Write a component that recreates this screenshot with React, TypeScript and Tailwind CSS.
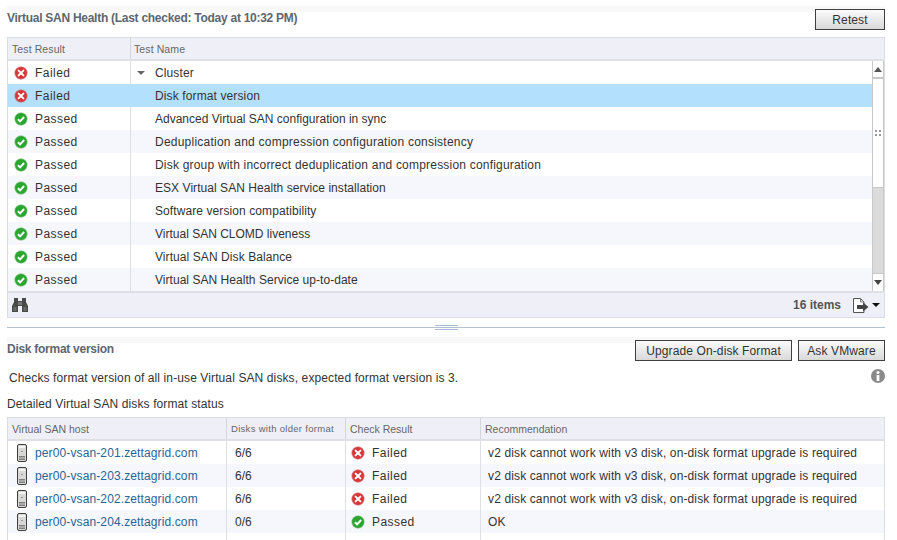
import React from "react";

const font = { fontFamily: '"Liberation Sans", Arial, sans-serif' };

function Failed() {
  return (
    <svg width="14" height="14" viewBox="0 0 14 14" className="shrink-0">
      <circle cx="7" cy="7" r="6.2" fill="#d9363a" stroke="#c9787a" strokeWidth="0.6" />
      <path d="M4.6 4.6 9.4 9.4M9.4 4.6 4.6 9.4" stroke="#fff" strokeWidth="2" strokeLinecap="round" />
    </svg>
  );
}

function Passed() {
  return (
    <svg width="14" height="14" viewBox="0 0 14 14" className="shrink-0">
      <circle cx="7" cy="7" r="6.2" fill="#2aa52f" stroke="#7cbf7e" strokeWidth="0.6" />
      <path d="M3.9 7.2 6.1 9.4 10.1 5" stroke="#fff" strokeWidth="2" fill="none" />
    </svg>
  );
}

function Status({ ok }: { ok: boolean }) {
  return (
    <div className="flex items-center gap-[7px]">
      {ok ? <Passed /> : <Failed />}
      <span className="tracking-[0.45px]">{ok ? "Passed" : "Failed"}</span>
    </div>
  );
}

function Server() {
  return (
    <svg width="12" height="18" viewBox="0 0 12 18" className="shrink-0">
      <rect x="1.5" y="0.5" width="9" height="17" rx="1.5" fill="#d8d8d6" stroke="#3e3e3e" />
      <rect x="3" y="2" width="6" height="2" fill="#f4f4f4" />
      <rect x="5.5" y="7" width="1" height="1" fill="#555" />
      <path d="M3 12.5h6M3 14h6M3 15.5h6" stroke="#666" strokeWidth="0.8" />
    </svg>
  );
}

function Btn({ label, w }: { label: string; w: string }) {
  return (
    <button
      className={`${w} h-[21px] border border-[#3f3f3f] bg-gradient-to-b from-[#fbfbfb] to-[#d9d9d9] text-[12px] tracking-[0.12px] text-[#333] flex items-center justify-center`}
    >
      {label}
    </button>
  );
}

const upperRows = [
  { n: "Disk format version", t: "tracking-[0.12px]" },
  { n: "Advanced Virtual SAN configuration in sync", t: "tracking-[0px]" },
  { n: "Deduplication and compression configuration consistency", t: "tracking-[0.23px]" },
  { n: "Disk group with incorrect deduplication and compression configuration", t: "tracking-[0.2px]" },
  { n: "ESX Virtual SAN Health service installation", t: "tracking-[0.05px]" },
  { n: "Software version compatibility", t: "tracking-[0.09px]" },
  { n: "Virtual SAN CLOMD liveness", t: "tracking-[0px]" },
  { n: "Virtual SAN Disk Balance", t: "tracking-[0.08px]" },
  { n: "Virtual SAN Health Service up-to-date", t: "tracking-[0.04px]" },
];

const rec = "v2 disk cannot work with v3 disk, on-disk format upgrade is required";
const hosts = [
  { h: "per00-vsan-201.zettagrid.com", d: "6/6", ok: false, r: rec },
  { h: "per00-vsan-203.zettagrid.com", d: "6/6", ok: false, r: rec },
  { h: "per00-vsan-202.zettagrid.com", d: "6/6", ok: false, r: rec },
  { h: "per00-vsan-204.zettagrid.com", d: "0/6", ok: true, r: "OK" },
];

function Scrollbar() {
  return (
    <div className="w-[12px] shrink-0 flex flex-col bg-[#dcdbdb] border-x border-[#c8c8c8]">
      <div className="h-[18px] bg-white border-b-2 border-[#c8c8c8] flex items-center justify-center">
        <div className="w-0 h-0 border-x-[4px] border-x-transparent border-b-[5px] border-b-[#555]" />
      </div>
      <div className="h-[109px] bg-white border-b border-[#c8c8c8] flex items-center justify-center">
        <div className="grid grid-cols-2 gap-[2px]">
          <div className="w-[2px] h-[2px] bg-[#999]" />
          <div className="w-[2px] h-[2px] bg-[#999]" />
          <div className="w-[2px] h-[2px] bg-[#999]" />
          <div className="w-[2px] h-[2px] bg-[#999]" />
        </div>
      </div>
      <div className="flex-1" />
      <div className="h-[18px] bg-white border-t border-[#c8c8c8] flex items-center justify-center">
        <div className="w-0 h-0 border-x-[4px] border-x-transparent border-t-[5px] border-t-[#444]" />
      </div>
    </div>
  );
}

export default function App() {
  return (
    <div style={font} className="w-[897px] h-[540px] overflow-hidden bg-white pl-[7px] pr-[12px] pt-[6px] flex flex-col text-[12px] text-[#333]">
      {/* top header */}
      <div className="h-[24px] shrink-0 flex justify-between bg-gradient-to-b from-[#f8f8f8] from-25% to-white to-25%">
        <div className="font-bold text-[12px] leading-[24px] text-[#5d6671] -tracking-[0.27px]">
          Virtual SAN Health (Last checked: Today at 10:32 PM)
        </div>
        <div className="pt-[3px]">
          <Btn label="Retest" w="w-[70px]" />
        </div>
      </div>

      {/* upper grid */}
      <div className="mt-[7px] h-[281px] shrink-0 border border-[#dcdde3] flex flex-col">
        <div className="h-[23px] shrink-0 flex bg-[#eff0f7] border-b-2 border-[#dfe0e5] text-[10.5px] tracking-[0.1px] text-[#666]">
          <div className="w-[123px] pl-[4px] border-r border-[#d5d6dc] leading-[22px]">Test Result</div>
          <div className="flex-1 pl-[3px] leading-[22px]">Test Name</div>
        </div>
        <div className="h-[230px] shrink-0 flex">
          <div className="flex-1 flex flex-col min-w-0">
            <div className="h-[23px] flex items-center bg-white">
              <div className="w-[123px] h-full pl-[6px] border-r border-[#dfe0e5] flex items-center">
                <Status ok={false} />
              </div>
              <div className="pl-[6px] pr-[10px] flex items-center">
                <div className="w-0 h-0 border-x-[4px] border-x-transparent border-t-[4px] border-t-[#666]" />
              </div>
              <span className="tracking-[0.12px]">Cluster</span>
            </div>
            {upperRows.map((r, i) => (
              <div
                key={r.n}
                className={`h-[23px] flex items-center ${i === 0 ? "bg-[#b3e0fd]" : i % 2 === 0 ? "bg-[#f5f7fc]" : "bg-white"}`}
              >
                <div className={`w-[123px] h-full pl-[6px] flex items-center ${i === 0 ? "" : "border-r border-[#dfe0e5]"}`}>
                  <Status ok={i !== 0} />
                </div>
                <div className={`pl-[24px] whitespace-nowrap ${r.t}`}>{r.n}</div>
              </div>
            ))}
          </div>
          <Scrollbar />
        </div>
        <div className="flex-1 flex items-center justify-between bg-[#eff0f7] border-t-2 border-[#dfe0e5] pl-[3px] pr-[4px]">
          <svg width="18" height="16" viewBox="0 0 18 16">
            <path d="M3 1h4v3h4V1h4v4l2 4v6h-6V9H7v6H1V9l2-4z" fill="#4a4a4a" />
            <rect x="7" y="5" width="4" height="3" fill="#777" />
            <path d="M2.5 10h3v4h-3zM12.5 10h3v4h-3z" fill="#6a6a6a" />
          </svg>
          <div className="flex items-center">
            <span className="font-bold text-[12px] text-[#555] mr-[11px]">16 items</span>
            <svg width="18" height="17" viewBox="0 0 18 17">
              <path d="M1.5 1.5h7l3.5 3.5v10.5H1.5z" fill="#fff" stroke="#555" />
              <path d="M8.5 1.5V5H12" fill="none" stroke="#777" />
              <path d="M5 8h6V5.5L16.5 10 11 14.5V12H5z" fill="#444" />
            </svg>
            <div className="ml-[2px] w-0 h-0 border-x-[4px] border-x-transparent border-t-[4px] border-t-[#111]" />
          </div>
        </div>
      </div>

      {/* splitter */}
      <div className="relative h-[1px] mt-[9px] shrink-0 bg-[#b3bfd3]">
        <div className="absolute left-[428px] -top-[2px] w-[23px] h-[1px] bg-[#a9bad3]" />
        <div className="absolute left-[428px] top-[2px] w-[23px] h-[1px] bg-[#a9bad3]" />
      </div>

      {/* lower header */}
      <div className="mt-[9px] h-[24px] shrink-0 flex justify-between bg-gradient-to-b from-[#f8f8f8] from-25% to-white to-25%">
        <div className="font-bold text-[12px] leading-[24px] text-[#5d6671] -tracking-[0.27px]">Disk format version</div>
        <div className="pt-[3px] flex gap-[6px]">
          <Btn label="Upgrade On-disk Format" w="w-[157px]" />
          <Btn label="Ask VMware" w="w-[87px]" />
        </div>
      </div>

      <div className="mt-[8px] h-[18px] shrink-0 flex items-center justify-between pl-[2px] tracking-[0.11px]">
        <span>Checks format version of all in-use Virtual SAN disks, expected format version is 3.</span>
        <svg width="14" height="14" viewBox="0 0 14 14" className="-mt-[4px]">
          <circle cx="7" cy="7" r="7" fill="#8a8a8a" />
          <circle cx="7" cy="3.6" r="1.5" fill="#fff" />
          <rect x="5.6" y="6" width="2.8" height="6" fill="#fff" />
        </svg>
      </div>
      <div className="mt-[8px] h-[18px] shrink-0 leading-[18px] tracking-[0.11px]">Detailed Virtual SAN disks format status</div>

      {/* lower table */}
      <div className="mt-[4px] flex-1 min-h-0 border border-b-0 border-[#dcdde3] flex flex-col">
        <div className="h-[23px] shrink-0 flex bg-[#eff0f7] border-b-2 border-[#dfe0e5] text-[10.5px] tracking-[0px] text-[#666] leading-[22px]">
          <div className="w-[219px] pl-[4px] border-r border-[#d5d6dc]">Virtual SAN host</div>
          <div className="w-[119px] pl-[4px] border-r border-[#d5d6dc] whitespace-nowrap text-[9.5px] tracking-[0.3px]">Disks with older format</div>
          <div className="w-[135px] pl-[4px] border-r border-[#d5d6dc]">Check Result</div>
          <div className="flex-1 pl-[4px]">Recommendation</div>
        </div>
        {hosts.map((r, i) => (
          <div key={r.h} className={`h-[23px] shrink-0 flex items-center ${i % 2 ? "bg-[#f5f7fc]" : "bg-white"}`}>
            <div className="w-[219px] h-full pl-[8px] border-r border-[#dfe0e5] flex items-center gap-[7px]">
              <Server />
              <span className="text-[#2a6496] tracking-[0.12px]">{r.h}</span>
            </div>
            <div className="w-[119px] h-full pl-[8px] border-r border-[#dfe0e5] flex items-center">{r.d}</div>
            <div className="w-[135px] h-full pl-[5px] border-r border-[#dfe0e5] flex items-center">
              <Status ok={r.ok} />
            </div>
            <div className="flex-1 pl-[7px] tracking-[0.13px] whitespace-nowrap">{r.r}</div>
          </div>
        ))}
        <div className="flex-1 flex">
          <div className="w-[219px] border-r border-[#dfe0e5]" />
          <div className="w-[119px] border-r border-[#dfe0e5]" />
          <div className="w-[135px] border-r border-[#dfe0e5]" />
        </div>
      </div>
    </div>
  );
}
